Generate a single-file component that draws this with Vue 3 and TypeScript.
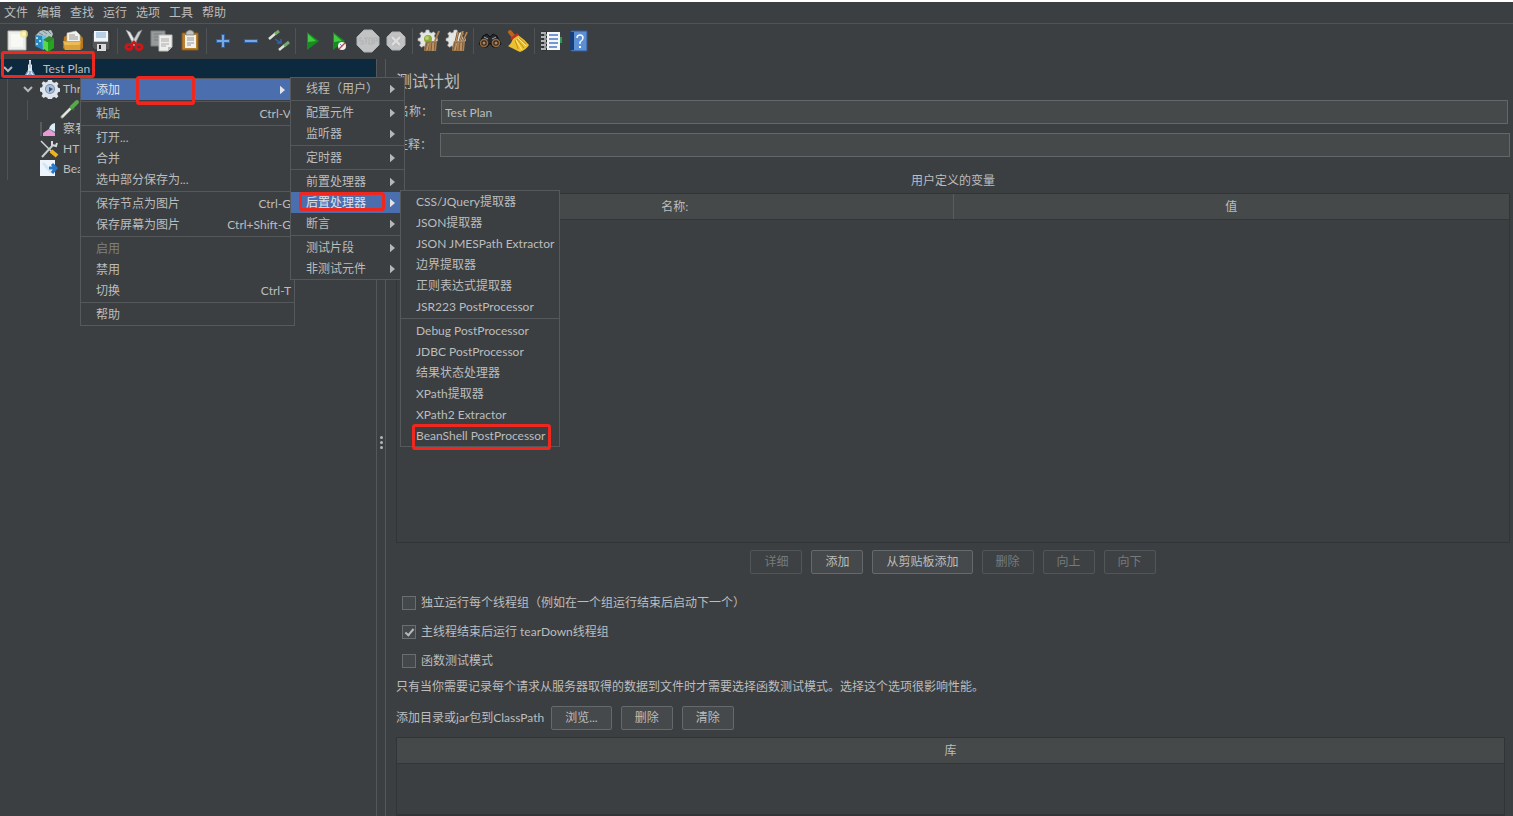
<script setup lang="ts">
import { ref } from 'vue'

interface MenuEntry {
  label: string
  shortcut?: string
  arrow?: boolean
  active?: boolean
  disabled?: boolean
  separated?: boolean
}

interface Tool {
  name: string
  svg: string
}

const menus = ['文件', '编辑', '查找', '运行', '选项', '工具', '帮助']

const gear = '<path d="M9 1h3l.5 2.300 2 .8 2-1.300 2 2-1.300 2 .8 2 2.500.6v2.600l-2.500.6-.8 2 1.300 2-2 2-2-1.300-2 .8L12 20H9l-.5-2.200-2-.8-2 1.300-2-2 1.300-2-.8-2L1 11.700V9.400l2.200-.6.8-2-1.300-2 2-2 2 1.300 1.800-.8z" fill="#e4e6e4" stroke="#a9aca9" stroke-width=".6"/>'
const bristles = '<path d="M9 12h11l-1 10H7q0-5 2-10z" fill="#a98256"/><path d="M10 13L8 22M12 13l-1 9M15 13l-1 9M18 13l-1 9" stroke="#7d5a36" stroke-width=".9"/><path d="M12 14l-2 7M16 14v8" stroke="#d0a878" stroke-width=".8"/>'

const toolGroups: Tool[][] = [
  [
    { name: '新建', svg: '<path d="M3 2h18v19H3z" fill="#eeeeec"/><path d="M3 2h18v19H3z" fill="none" stroke="#b8b8b4"/><path d="M6 5h12v13H6z" fill="#f8f8f5"/><circle cx="19" cy="5" r="4" fill="#f2e58a" opacity=".7"/><circle cx="19" cy="5" r="2" fill="#fff6b0"/>' },
    { name: '模板', svg: '<path d="M3 6l4-4 4-1 3 1 4-1 2 4-2 5H5z" fill="#b5c3c6"/><path d="M6 4l4 2M10 2l4 3M15 2l3 3" stroke="#6d8a90"/><path d="M2 6l8 1v14l-8-4z" fill="#2789bd"/><path d="M9 7l4-1v13l-3 2z" fill="#62c2e8"/><path d="M3 9h2M6 12h2M3 15h2" stroke="#d5f2fb" stroke-width="1.500"/><path d="M10 11l5 2v10l-5-4z" fill="#5bd64b"/><path d="M15 13l6-4v10l-6 4z" fill="#23a51c"/><path d="M10 11l6-4 5 2-6 4z" fill="#2f8a2a"/>' },
    { name: '打开', svg: '<path d="M3 8l3-2h13l3 3v10l-2 2H4l-2-2z" fill="#b7791f"/><path d="M6 4l9-2 4 4v8H6z" fill="#f2f2ef" stroke="#bdbdb9" stroke-width=".6"/><path d="M8 6h6M8 8h9M8 10h9" stroke="#969696"/><path d="M2 12h18l-1 9H4z" fill="#dca136"/><path d="M3 13h16l-.5 3H3.500z" fill="#ebbb58"/>' },
    { name: '保存', svg: '<path d="M3 3h18v18H6l-3-3z" fill="#555759" stroke="#303234"/><path d="M5 2h14v10H5z" fill="#f0f5fa"/><path d="M7 4h10M7 6h10M7 8h10" stroke="#7da9d5"/><path d="M5 12h14v1H5z" fill="#bcc2c7"/><path d="M8 15h9v7H8z" fill="#d8dadb"/><path d="M10 16h2v4h-2z" fill="#262829"/>' },
  ],
  [
    { name: '剪切', svg: '<path d="M4 1l4 2 7 12-3 2z" fill="#e7e8e8" stroke="#8d9091" stroke-width=".6"/><path d="M20 1l-4 2-7 12 3 2z" fill="#cfd1d1" stroke="#828586" stroke-width=".6"/><ellipse cx="7" cy="18" rx="3" ry="2.500" fill="none" stroke="#c9171b" stroke-width="3"/><ellipse cx="17" cy="18" rx="3" ry="2.500" fill="none" stroke="#c9171b" stroke-width="3"/><path d="M9 16l3-3 3 3" stroke="#c9171b" stroke-width="2.500" fill="none"/>' },
    { name: '复制', svg: '<path d="M1 2h14v15H1z" fill="#979a9b" stroke="#7b7e7f"/><path d="M4 5h8M4 8h7M4 11h5" stroke="#7b7e7f"/><path d="M9 6h13v12l-4 4H9z" fill="#eeeeec" stroke="#bbb"/><path d="M11 10h8M11 12h8M11 15h8M11 17h5" stroke="#aaa"/><path d="M18 22v-4h4z" fill="#bbb"/>' },
    { name: '粘贴', svg: '<path d="M4 4h16v17H4z" fill="#b9812f" stroke="#86591b"/><path d="M7 6h11v13H7z" fill="#f0f0ed"/><path d="M8 4q0-2 4-3 4 1 4 3v2H8z" fill="#bfc1bd" stroke="#73756f" stroke-width=".7"/><path d="M9 9h7M9 11h7M9 14h7M9 16h4" stroke="#999"/>' },
  ],
  [
    { name: '全部展开', svg: '<path d="M12 5v14M5 12h14" stroke="#315f9e" stroke-width="4"/><path d="M12 6v12M6 12h12" stroke="#79a9e3" stroke-width="2"/>' },
    { name: '全部折叠', svg: '<path d="M5 12h14" stroke="#315f9e" stroke-width="4"/><path d="M6 12h12" stroke="#79a9e3" stroke-width="2"/>' },
    { name: '切换', svg: '<path d="M2 10l7-6" stroke="#dfe3dc" stroke-width="2.500"/><path d="M8 5l4-3" stroke="#77a96d" stroke-width="3"/><path d="M12 21l6-5" stroke="#dfe3dc" stroke-width="2.500"/><path d="M17 17l5-4" stroke="#77a96d" stroke-width="3"/><path d="M8 10l6 4m0-4v4h-4" stroke="#2f64b5" stroke-width="1.500" fill="none"/>' },
  ],
  [
    { name: '启动', svg: '<path d="M7 3l12 9-12 9z" fill="#168c20"/><path d="M8 5l8 7-8 1z" fill="#42ca43"/>' },
    { name: '不停顿开始', svg: '<path d="M5 3l12 9-12 9z" fill="#168c20"/><path d="M6 5l8 7-8 1z" fill="#42ca43"/><circle cx="14" cy="17" r="4" fill="#f3f3f3"/><path d="M11 20l6-6" stroke="#d23b35" stroke-width="1.300"/><path d="M12 15l2 2" stroke="#7385be"/>' },
    { name: '停止', svg: '<path d="M8 1h8l7 7v8l-7 7H8l-7-7V8z" fill="#c1c2c3" stroke="#b0b2b3"/><path d="M6 9H4v3h3v3H4M8 9h4M10 9v6M13 9h3v6h-3zM18 15V9h3v3h-3" fill="none" stroke="#b1b3b4" stroke-width="1.200"/>' },
    { name: '关闭', svg: '<path d="M8 3h8l5 5v8l-5 5H8l-5-5V8z" fill="#c1c2c3" stroke="#b0b2b3"/><path d="M8 8l8 8M16 8l-8 8" stroke="#b0b2b3" stroke-width="4"/><path d="M8 8l8 8M16 8l-8 8" stroke="#dcdcdc" stroke-width="2.500"/>' },
  ],
  [
    { name: '清除', svg: gear + '<circle cx="11" cy="10" r="4" fill="#8aac39"/><circle cx="10" cy="9" r="2" fill="#bdcc72"/><path d="M18 12l4-10" stroke="#aa7c4a" stroke-width="2"/>' + bristles },
    { name: '清除全部', svg: gear + '<path d="M11 12l2-9M15 12l3-10M18 12l4-9" stroke="#79552f" stroke-width="2.500"/><path d="M11 12l2-9M15 12l3-10M18 12l4-9" stroke="#c29b68"/>' + bristles },
  ],
  [
    { name: '查找', svg: '<path d="M5 7l4-2 3 3 3-3 4 2 4 8-4 3h-4l-3-4-3 4H5l-4-3z" fill="#252729" stroke="#0e0f10"/><path d="M6 8l4 2M18 8l-4 2" stroke="#9badb4"/><circle cx="6" cy="14" r="3.500" fill="#3a2619" stroke="#8f6b45" stroke-width="1.500"/><circle cx="18" cy="14" r="3.500" fill="#3a2619" stroke="#8f6b45" stroke-width="1.500"/><circle cx="6" cy="14" r="1.500" fill="#a48b6c"/><circle cx="18" cy="14" r="1.500" fill="#a48b6c"/>' },
    { name: '重置查找', svg: '<path d="M4 3l4 5" stroke="#b7661d" stroke-width="4" stroke-linecap="round"/><path d="M7 9l5-3q6 4 11 10-3 5-9 7-8-4-12-6 4-3 5-8z" fill="#ebc02f"/><path d="M9 11l3 9M11 10l7 9M13 9l7 6" stroke="#c98e17"/><path d="M10 11l6 10M12 9l8 8" stroke="#ffec84"/><path d="M5 10l7-5" stroke="#c82d20" stroke-width="2.500"/>' },
  ],
  [
    { name: '函数助手对话框', svg: '<path d="M5 3h16v18H5z" fill="#f4f5f5"/><path d="M3 4h5M3 8h5M3 12h5M3 16h5M3 20h5" stroke="#25282a" stroke-width="3"/><path d="M2 4h5M2 8h5M2 12h5M2 16h5M2 20h5" stroke="#dfe1e1" stroke-width="1.500"/><path d="M10 6h9M10 10h9M10 14h9M10 18h8" stroke="#4978c9" stroke-width="1.500"/><path d="M21 8h2v6h-2z" fill="#299d51"/>' },
    { name: '帮助', svg: '<path d="M4 2h16v20H4z" fill="#5c8fd4" stroke="#315b98"/><path d="M3 3h4v18H3z" fill="#173e78"/><path d="M10 9q0-3 3-3t3 3q0 2-3 4v2" fill="none" stroke="#f4f7fb" stroke-width="1.500"/><path d="M12 17h2v2h-2z" fill="#f4f7fb"/>' },
  ],
]

const contextMenu: MenuEntry[] = [
  { label: '添加', arrow: true, active: true },
  { label: '粘贴', shortcut: 'Ctrl-V', separated: true },
  { label: '打开...', separated: true },
  { label: '合并' },
  { label: '选中部分保存为...' },
  { label: '保存节点为图片', shortcut: 'Ctrl-G', separated: true },
  { label: '保存屏幕为图片', shortcut: 'Ctrl+Shift-G' },
  { label: '启用', disabled: true, separated: true },
  { label: '禁用' },
  { label: '切换', shortcut: 'Ctrl-T' },
  { label: '帮助', separated: true },
]

const addMenu: MenuEntry[] = [
  { label: '线程（用户）', arrow: true },
  { label: '配置元件', arrow: true, separated: true },
  { label: '监听器', arrow: true },
  { label: '定时器', arrow: true, separated: true },
  { label: '前置处理器', arrow: true, separated: true },
  { label: '后置处理器', arrow: true, active: true },
  { label: '断言', arrow: true },
  { label: '测试片段', arrow: true, separated: true },
  { label: '非测试元件', arrow: true },
]

const postMenu: MenuEntry[] = [
  { label: 'CSS/JQuery提取器' },
  { label: 'JSON提取器' },
  { label: 'JSON JMESPath Extractor' },
  { label: '边界提取器' },
  { label: '正则表达式提取器' },
  { label: 'JSR223 PostProcessor' },
  { label: 'Debug PostProcessor', separated: true },
  { label: 'JDBC PostProcessor' },
  { label: '结果状态处理器' },
  { label: 'XPath提取器' },
  { label: 'XPath2 Extractor' },
  { label: 'BeanShell PostProcessor' },
]

const popups = [
  { id: 'context', entries: contextMenu },
  { id: 'add', entries: addMenu },
  { id: 'post', entries: postMenu },
]

const tree = [
  { label: 'Test Plan', level: 0, open: true, svg: '<path d="M9 1h2v4l1 1v5l4 7h-3l-2-3v3H9v-3l-2 3H4l4-7V6l1-1z" fill="#dfe7ef"/><path d="M8 12l-3 5h2M12 12l3 5h-2M10 12v5" stroke="#5d96d1" stroke-width="1.300" fill="none"/><path d="M10 2v7" stroke="#a4afb9"/>' },
  { label: 'Thr', level: 1, open: true, svg: '<path d="M8 1h4l.5 2 2 .8 2-1 2 2-1.200 2 .8 2 1.900.5v3.400l-2 .5-.8 2 1.200 2-2 2-2-1.200-2 .8-.5 1.900H8l-.5-2-2-.8-2 1.200-2-2 1.200-2-.8-2L0 12.600V8.700l2-.5.8-2-1.200-2 2-2 2 1.200 2-.8z" fill="#dde4ec"/><circle cx="10" cy="10" r="5" fill="#7d8ea4"/><circle cx="10" cy="10" r="4" fill="#a9bfdb"/><path d="M9 8l4 2-4 3z" fill="#36527b"/>' },
  { label: '', level: 2, open: false, svg: '<path d="M2 18l9-9" stroke="#9da49c" stroke-width="3" stroke-linecap="round"/><path d="M2 18l9-9" stroke="#e4e9e1" stroke-width="2"/><path d="M10 7l4 4" stroke="#356a32" stroke-width="2.500"/><path d="M12 8l5-5" stroke="#5aa64d" stroke-width="4" stroke-linecap="round"/>' },
  { label: '察看', level: 1, open: false, svg: '<path d="M1 3v14" stroke="#777b7d"/><path d="M3 17v-3l6-4 6 4v3z" fill="#e79bd5"/><path d="M9 10q1-5 6-6v9z" fill="#dcebf8"/><path d="M9 10l6 3" stroke="#829eba" fill="none"/>' },
  { label: 'HT', level: 1, open: false, svg: '<path d="M1 2l11 11" stroke="#d0d4d5" stroke-width="1.500"/><path d="M11 12l6 5" stroke="#eeb51e" stroke-width="4"/><path d="M2 18L13 6" stroke="#c6cbcc" stroke-width="2"/><path d="M12 2v4l4 1 1-3" fill="none" stroke="#d4d8d9" stroke-width="2"/>' },
  { label: 'Bea', level: 1, open: false, svg: '<path d="M0 1h15v16H0z" fill="#edf4fb"/><path d="M3 4l8 9" stroke="#d5e5f3" stroke-width="3"/><path d="M9 9h6M12 5l4 4-4 5" fill="none" stroke="#2678c9" stroke-width="3"/>' },
]

const tableButtons = [
  { label: '详细', disabled: true },
  { label: '添加', disabled: false },
  { label: '从剪贴板添加', disabled: false },
  { label: '删除', disabled: true },
  { label: '向上', disabled: true },
  { label: '向下', disabled: true },
]

const options = ref([
  { id: 'serial', label: '独立运行每个线程组（例如在一个组运行结束后启动下一个）', checked: false },
  { id: 'teardown', label: '主线程结束后运行 tearDown线程组', checked: true },
  { id: 'functional', label: '函数测试模式', checked: false },
])

const planName = ref('Test Plan')
const comment = ref('')
const marks = ['plan', 'add', 'post', 'beanshell']
</script>

<template>
  <div class="window">
    <nav class="menubar">
      <button v-for="m in menus" :key="m" type="button">{{ m }}</button>
    </nav>
    <div class="toolbar" role="toolbar">
      <div v-for="(group, i) in toolGroups" :key="i" class="tool-group">
        <button v-for="tool in group" :key="tool.name" type="button" :aria-label="tool.name">
          <svg viewBox="0 0 24 24" width="24" height="24" v-html="tool.svg"></svg>
        </button>
      </div>
    </div>

    <main class="split">
      <aside class="tree-pane">
        <ul class="tree">
          <li v-for="(node, i) in tree" :key="i" :class="['node', 'level-' + node.level, { selected: i === 0 }]">
            <svg v-if="node.open" class="chevron" viewBox="0 0 10 10"><path d="M1 3l4 4 4-4" /></svg>
            <svg class="node-icon" viewBox="0 0 20 20" v-html="node.svg"></svg>
            <span>{{ node.label }}</span>
          </li>
        </ul>
      </aside>
      <div class="divider"><i></i><i></i><i></i></div>

      <section class="editor">
        <h1>测试计划</h1>
        <div class="field name-field">
          <label for="plan-name">名称：</label>
          <input id="plan-name" v-model="planName" type="text" />
        </div>
        <div class="field comment-field">
          <label for="plan-comment">注释：</label>
          <input id="plan-comment" v-model="comment" type="text" />
        </div>
        <h2>用户定义的变量</h2>
        <div class="table-box variables">
          <table>
            <thead><tr><th>名称:</th><th>值</th></tr></thead>
            <tbody></tbody>
          </table>
        </div>
        <div class="actions">
          <button v-for="b in tableButtons" :key="b.label" type="button" class="btn" :disabled="b.disabled">{{ b.label }}</button>
        </div>
        <div class="options">
          <div v-for="o in options" :key="o.id" class="option">
            <input :id="o.id" v-model="o.checked" type="checkbox" />
            <label :for="o.id">{{ o.label }}</label>
          </div>
        </div>
        <p class="note">只有当你需要记录每个请求从服务器取得的数据到文件时才需要选择函数测试模式。选择这个选项很影响性能。</p>
        <div class="classpath">
          <span>添加目录或jar包到ClassPath</span>
          <div class="classpath-buttons">
            <button type="button" class="btn">浏览...</button>
            <button type="button" class="btn">删除</button>
            <button type="button" class="btn">清除</button>
          </div>
        </div>
        <div class="table-box library">
          <table>
            <thead><tr><th>库</th></tr></thead>
            <tbody></tbody>
          </table>
        </div>
      </section>
    </main>

    <div v-for="p in popups" :key="p.id" :class="['popup', 'popup-' + p.id]" role="menu">
      <template v-for="e in p.entries" :key="e.label">
        <hr v-if="e.separated" />
        <button type="button" role="menuitem" :class="{ active: e.active }" :disabled="e.disabled">
          <span>{{ e.label }}</span>
          <span v-if="e.shortcut" class="shortcut">{{ e.shortcut }}</span>
          <svg v-if="e.arrow" class="arrow" viewBox="0 0 6 10"><path d="M0 0l6 5-6 5z" /></svg>
        </button>
      </template>
    </div>
    <div v-for="m in marks" :key="m" :class="['mark', 'mark-' + m]"></div>
  </div>
</template>

<style>
body {
  margin: 0;
  background: #3c3f41;
}
</style>

<style scoped>
.window {
  position: relative;
  display: flex;
  flex-direction: column;
  box-sizing: border-box;
  height: 100vh;
  overflow: hidden;
  border-top: 2px solid #fff;
  background: #3c3f41;
  color: #bbbdbe;
  font: 12px/20px Lato, "Noto Sans CJK SC", sans-serif;
}
button,
input {
  font: inherit;
  color: inherit;
}
button {
  margin: 0;
  padding: 0;
  border: 0;
  background: none;
  white-space: nowrap;
}
.menubar {
  display: flex;
  flex: none;
  gap: 9px;
  height: 21px;
  padding: 0 4px;
  border-bottom: 1px solid #515456;
}
.toolbar {
  display: flex;
  flex: none;
  align-items: center;
  height: 33px;
  padding: 0 0 2px 3px;
}
.tool-group {
  display: flex;
}
.tool-group + .tool-group {
  margin-left: 2px;
  padding-left: 2px;
  border-left: 1px solid #505355;
}
.tool-group button {
  display: flex;
  align-items: center;
  justify-content: center;
  width: 28px;
  height: 26px;
}
.tool-group svg {
  display: block;
}
.split {
  display: flex;
  flex: 1;
  min-height: 0;
}
.tree-pane {
  flex: none;
  width: 376px;
  border-right: 1px solid #55585a;
}
.tree {
  position: relative;
  margin: 0;
  padding: 0;
  list-style: none;
}
.tree::before,
.tree::after {
  content: "";
  position: absolute;
  top: 20px;
  left: 7px;
  height: 101px;
  border-left: 1px solid #505355;
}
.tree::after {
  top: 41px;
  left: 27px;
  height: 20px;
}
.node {
  display: flex;
  align-items: center;
  height: 20px;
  white-space: nowrap;
}
.node.selected {
  background: #0d293e;
}
.level-0 {
  padding-left: 3px;
}
.level-1 {
  padding-left: 40px;
}
.level-2 {
  padding-left: 60px;
}
.level-1:has(.chevron) {
  padding-left: 23px;
}
.chevron {
  width: 10px;
  height: 10px;
  margin-right: 7px;
  fill: none;
  stroke: #b5b7b8;
  stroke-width: 2;
}
.node-icon {
  width: 20px;
  height: 20px;
  margin-right: 3px;
}
.divider {
  display: flex;
  flex: none;
  flex-direction: column;
  align-items: center;
  justify-content: center;
  gap: 2px;
  width: 8px;
  padding-top: 10px;
  border-right: 1px solid #55585a;
}
.divider i {
  width: 3px;
  height: 3px;
  border-radius: 2px;
  background: #b4b6b7;
}
.editor {
  display: flex;
  flex: 1;
  flex-direction: column;
  min-width: 0;
  padding: 0 3px 0 10px;
}
h1 {
  margin: 10px 0 0;
  font-size: 16px;
  font-weight: 400;
  line-height: 24px;
}
.field {
  display: flex;
  align-items: center;
}
.field label {
  flex: none;
  width: 44px;
}
.field input {
  flex: 1;
  box-sizing: border-box;
  min-width: 0;
  height: 24px;
  padding: 0 3px;
  border: 1px solid #646769;
  outline: 0;
  background: #45494a;
}
.name-field {
  margin: 7px 2px 0 1px;
}
.comment-field {
  margin-top: 9px;
}
h2 {
  margin: 14px 0 2px;
  font-size: 12px;
  font-weight: 400;
  line-height: 20px;
  text-align: center;
}
.table-box {
  box-sizing: border-box;
  border: 1px solid #323537;
}
.variables {
  flex: none;
  height: 350px;
}
.library {
  flex: 1;
  min-height: 60px;
  margin: 7px 5px 0 0;
  border-bottom-width: 2px;
}
table {
  width: 100%;
  table-layout: fixed;
  border-collapse: collapse;
}
th {
  height: 25px;
  padding: 0;
  border-bottom: 1px solid #333638;
  background: #45494a;
  font-weight: 400;
}
th + th {
  border-left: 1px solid #5a5d5f;
}
.actions {
  display: flex;
  justify-content: center;
  gap: 9px;
  margin-top: 7px;
}
.btn {
  box-sizing: border-box;
  height: 24px;
  padding: 0 13px;
  border: 1px solid #66696b;
  border-radius: 2px;
  background: #46494b;
}
.btn:disabled {
  border-color: #535658;
  background: #3e4143;
  color: #777a7b;
}
.options {
  display: flex;
  flex-direction: column;
  gap: 9px;
  margin: 19px 0 0 6px;
}
.option {
  display: flex;
  align-items: center;
  gap: 5px;
  height: 20px;
}
.option input {
  display: grid;
  place-items: center;
  box-sizing: border-box;
  width: 14px;
  height: 14px;
  margin: 0;
  border: 1px solid #6b6e70;
  background: #43494a;
  appearance: none;
}
.option input:checked::before {
  content: "";
  width: 3px;
  height: 7px;
  margin-bottom: 2px;
  border: solid #b5b8b9;
  border-width: 0 2px 2px 0;
  transform: rotate(40deg);
}
.note {
  margin: 6px 0 0;
}
.classpath {
  display: flex;
  align-items: center;
  gap: 7px;
  margin-top: 9px;
}
.classpath-buttons {
  display: flex;
  gap: 9px;
}
.popup {
  position: absolute;
  box-sizing: border-box;
  border: 1px solid #56595b;
  background: #3c3f41;
}
.popup-context {
  top: 76px;
  left: 80px;
  width: 215px;
}
.popup-add {
  top: 75px;
  left: 290px;
  width: 115px;
}
.popup-post {
  top: 188px;
  left: 400px;
  width: 160px;
}
.popup button {
  display: flex;
  align-items: center;
  width: 100%;
  height: 21px;
  padding: 0 3px 0 15px;
}
.popup button.active {
  background: #4b6eaf;
  color: #e0e3e8;
}
.popup button:disabled {
  color: #7d8081;
}
.popup hr {
  height: 1px;
  margin: 1px 0;
  border: 0;
  background: #55585a;
}
.shortcut,
.arrow {
  margin-left: auto;
}
.arrow {
  width: 5px;
  height: 10px;
  margin-right: 6px;
  fill: #b5b8b9;
}
.active .arrow {
  fill: #e0e3e8;
}
.mark {
  position: absolute;
  box-sizing: border-box;
  border: 3px solid #ee281f;
  border-radius: 3px;
  pointer-events: none;
}
.mark-plan {
  top: 49px;
  left: 1px;
  width: 94px;
  height: 27px;
}
.mark-add {
  top: 74px;
  left: 136px;
  width: 59px;
  height: 29px;
}
.mark-post {
  top: 190px;
  left: 299px;
  width: 86px;
  height: 19px;
}
.mark-beanshell {
  top: 422px;
  left: 412px;
  width: 139px;
  height: 26px;
}
</style>
